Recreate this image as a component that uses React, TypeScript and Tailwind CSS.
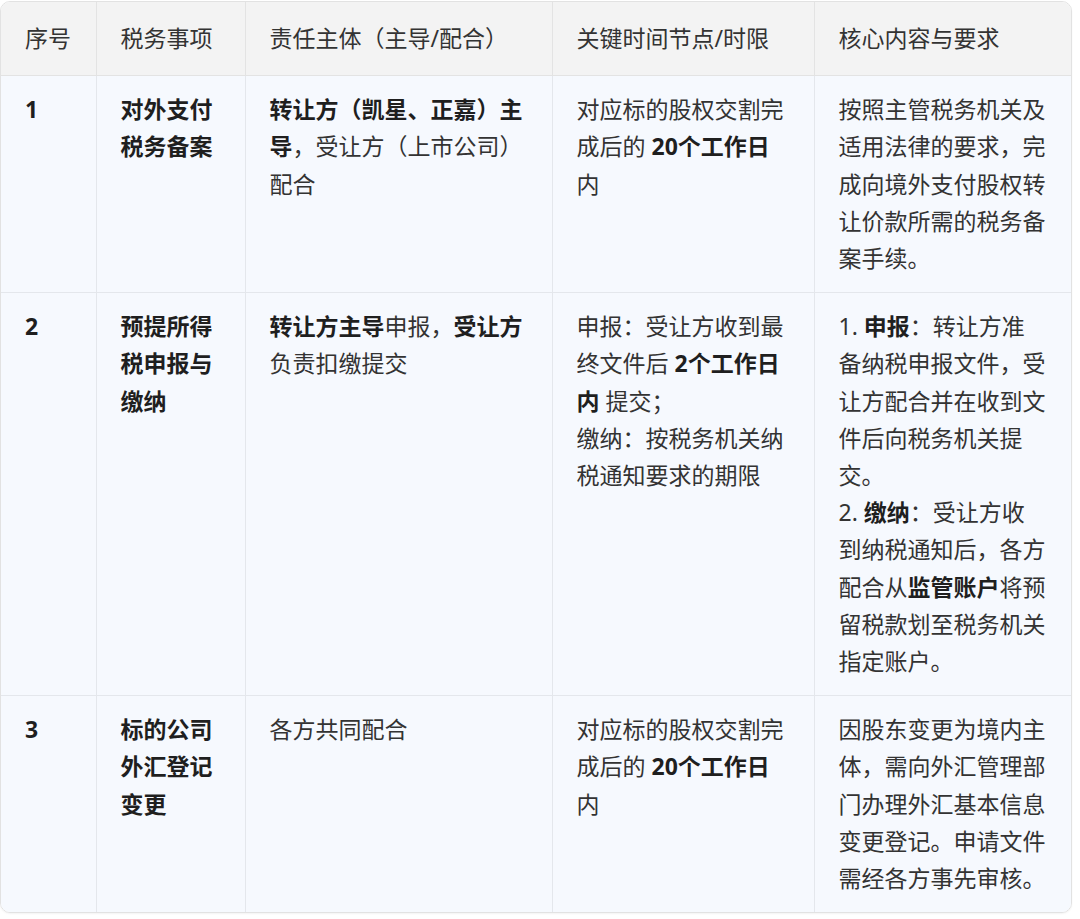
import React from "react";

const B = ({ children }: { children: React.ReactNode }) => (
  <span className="font-bold text-[#1f1f1f]">{children}</span>
);

const headers = ["序号", "税务事项", "责任主体（主导/配合）", "关键时间节点/时限", "核心内容与要求"];

const rows: React.ReactNode[][] = [
  [
    <B>1</B>,
    <B>
      对外支付
      <br />
      税务备案
    </B>,
    <>
      <B>转让方（凯星、正嘉）主</B>
      <br />
      <B>导</B>，受让方（上市公司）
      <br />
      配合
    </>,
    <>
      对应标的股权交割完
      <br />
      成后的 <B>20个工作日</B>
      <br />内
    </>,
    <>
      按照主管税务机关及
      <br />
      适用法律的要求，完
      <br />
      成向境外支付股权转
      <br />
      让价款所需的税务备
      <br />
      案手续。
    </>,
  ],
  [
    <B>2</B>,
    <B>
      预提所得
      <br />
      税申报与
      <br />
      缴纳
    </B>,
    <>
      <B>转让方主导</B>申报，<B>受让方</B>
      <br />
      负责扣缴提交
    </>,
    <>
      申报：受让方收到最
      <br />
      终文件后 <B>2个工作日</B>
      <br />
      <B>内</B> 提交；
      <br />
      缴纳：按税务机关纳
      <br />
      税通知要求的期限
    </>,
    <>
      1. <B>申报</B>：转让方准
      <br />
      备纳税申报文件，受
      <br />
      让方配合并在收到文
      <br />
      件后向税务机关提
      <br />
      交。
      <br />
      2. <B>缴纳</B>：受让方收
      <br />
      到纳税通知后，各方
      <br />
      配合从<B>监管账户</B>将预
      <br />
      留税款划至税务机关
      <br />
      指定账户。
    </>,
  ],
  [
    <B>3</B>,
    <B>
      标的公司
      <br />
      外汇登记
      <br />
      变更
    </B>,
    <>各方共同配合</>,
    <>
      对应标的股权交割完
      <br />
      成后的 <B>20个工作日</B>
      <br />内
    </>,
    <>
      因股东变更为境内主
      <br />
      体，需向外汇管理部
      <br />
      门办理外汇基本信息
      <br />
      变更登记。申请文件
      <br />
      需经各方事先审核。
    </>,
  ],
];

const widths = ["w-[95px]", "w-[149px]", "w-[307px]", "w-[262px]", "w-[257px]"];

export default function App() {
  return (
    <div className="w-[1080px] h-[919px] bg-white pt-[1px]">
      <div
        className="w-[1072px] rounded-[10px] border border-[#e2e2e2] overflow-hidden shadow-[0_1px_2px_rgba(0,0,0,0.05)] text-[23px] leading-[37.2px] text-[#333]"
        style={{ fontFamily: '"Noto Sans", "Noto Sans CJK SC", sans-serif' }}
      >
        <table className="w-[1070px] table-fixed border-collapse">
          <colgroup>
            {widths.map((w, i) => (
              <col key={i} className={w} />
            ))}
          </colgroup>
          <thead>
            <tr className="bg-[#f3f3f3]">
              {headers.map((h, i) => (
                <th
                  key={i}
                  className={`px-6 py-[18px] text-left font-normal whitespace-nowrap align-top border-b border-[#e3e3e3] ${
                    i < 4 ? "border-r" : ""
                  }`}
                >
                  {h}
                </th>
              ))}
            </tr>
          </thead>
          <tbody>
            {rows.map((r, ri) => (
              <tr key={ri} className="bg-[#f6f9fe]">
                {r.map((c, ci) => (
                  <td
                    key={ci}
                    className={`px-6 py-[15px] align-top whitespace-nowrap border-[#e4e7ec] ${
                      ci < 4 ? "border-r" : ""
                    } ${ri < 2 ? "border-b" : ""}`}
                  >
                    {c}
                  </td>
                ))}
              </tr>
            ))}
          </tbody>
        </table>
      </div>
    </div>
  );
}
